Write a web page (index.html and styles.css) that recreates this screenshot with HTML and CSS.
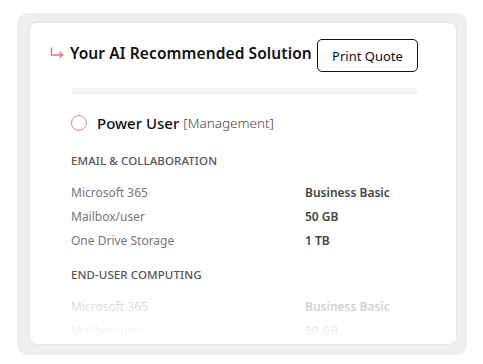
FILE: index.html
```html
<!DOCTYPE html>
<html lang="en">
<head>
    <meta charset="UTF-8">
    <meta name="viewport" content="width=device-width, initial-scale=1.0">
    <title>Your AI Recommended Solution</title>
    <link rel="stylesheet" href="styles.css">
</head>
<body>
    <div class="panel">
        <div class="card">
            <div class="card-header">
                <svg class="arrow" width="14" height="12" viewBox="0 0 14 12" fill="none" stroke="currentColor" stroke-width="1.4">
                    <path d="M1.5 0.5v7.5h11"></path>
                    <path d="M9.5 5l3 3-3 3"></path>
                </svg>
                <h2 class="card-title">Your AI Recommended Solution</h2>
                <button class="print-button">Print Quote</button>
            </div>

            <div class="progress-bar"></div>

            <div class="plan">
                <span class="radio"></span>
                <span class="plan-name">Power User</span>
                <span class="plan-tag">[Management]</span>
            </div>

            <!-- 邮件与协作 -->
            <h3 class="section-title">EMAIL &amp; COLLABORATION</h3>
            <div class="spec-list">
                <span class="spec-label">Microsoft 365</span>
                <span class="spec-value">Business Basic</span>
                <span class="spec-label">Mailbox/user</span>
                <span class="spec-value">50 GB</span>
                <span class="spec-label">One Drive Storage</span>
                <span class="spec-value">1 TB</span>
            </div>

            <h3 class="section-title">END-USER COMPUTING</h3>
            <div class="spec-list">
                <span class="spec-label">Microsoft 365</span>
                <span class="spec-value">Business Basic</span>
                <span class="spec-label">Mailbox/user</span>
                <span class="spec-value">50 GB</span>
            </div>
        </div>
    </div>
</body>
</html>
```

FILE: styles.css
```css
body {
    margin: 0;
    padding: 0;
    font-family: "Noto Sans", Arial, sans-serif;
    background-color: #ffffff;
    color: #111111;
}

.panel {
    width: 450px;
    height: 342px;
    box-sizing: border-box;
    margin: 13px 0 0 17px;
    padding: 9px 10px 10px 12px;
    background-color: #eeeeee;
    border-radius: 12px;
}

.card {
    position: relative;
    height: 100%;
    box-sizing: border-box;
    padding: 16px 38px 0 20px;
    background-color: #ffffff;
    border: 1px solid #e4e4e4;
    border-radius: 8px;
    overflow: hidden;
}

/* 底部渐隐 */
.card::after {
    content: "";
    position: absolute;
    left: 0;
    right: 0;
    bottom: 0;
    height: 58px;
    background: linear-gradient(to bottom, rgba(255, 255, 255, 0.6), #ffffff 95%);
}

.card-header {
    display: flex;
    align-items: center;
}

.arrow {
    color: #e0727c;
    margin: -6px 6px 0 0;
    flex-shrink: 0;
}

.card-title {
    margin: -5px 0 0 0;
    font-size: 15.5px;
    font-weight: 600;
    letter-spacing: 0.1px;
    flex: 1;
}

.print-button {
    font-family: inherit;
    font-size: 13px;
    color: #111111;
    background-color: #ffffff;
    border: 1px solid #111111;
    border-radius: 5px;
    width: 101px;
    height: 33px;
    padding: 0;
}

.progress-bar {
    height: 7px;
    margin: 16px 0 0 21px;
    background-color: #f5f5f5;
    border-radius: 4px;
}

.plan {
    display: flex;
    align-items: center;
    margin: 18px 0 0 21px;
}

.radio {
    width: 14px;
    height: 14px;
    border: 1px solid #e58a92;
    border-radius: 50%;
    margin-right: 10px;
}

.plan-name {
    font-size: 15px;
    font-weight: 500;
    margin-right: 4px;
}

.plan-tag {
    font-size: 13.5px;
    font-weight: 300;
    color: #444444;
}

.section-title {
    margin: 20px 0 0 21px;
    font-size: 11.5px;
    font-weight: 500;
    color: #555555;
    letter-spacing: 0.1px;
}

.spec-list {
    display: grid;
    grid-template-columns: 234px 1fr;
    row-gap: 6px;
    margin: 16px 0 0 21px;
    font-size: 12px;
    line-height: 18px;
}

.spec-list + .section-title {
    margin-top: 17px;
}

.spec-label {
    color: #777777;
}

.spec-value {
    color: #444444;
    font-weight: 600;
}
```
